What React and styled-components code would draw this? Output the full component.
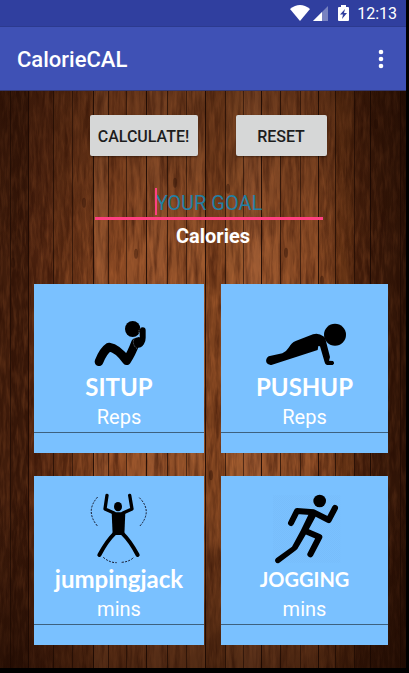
import React from "react";
import styled, { createGlobalStyle } from "styled-components";

/* Wooden wall: planks with individual tones, grain noise and darkened edges. */
const seams = [0, 10, 28, 53, 72, 93, 108, 126, 146, 167, 186, 205, 225, 243, 261, 280, 300, 318, 335, 354, 370, 400, 406];
const tones = ["#5a2a12", "#48200d", "#642f15", "#6c3517", "#733a1a", "#91522c", "#874722", "#904f28", "#95542d", "#8f4f28", "#96552c", "#7d421e", "#95552b", "#9c5a32", "#94532b", "#864924", "#8b4c26", "#7e431f", "#723a17", "#582910", "#4e240e", "#3e1b0a"];
const planks = tones
  .map((tone, i) => `<rect x="${seams[i]}" width="${seams[i + 1] - seams[i]}" height="578" fill="${tone}"/>`)
  .join("");
const seamLines = seams
  .slice(1, -1)
  .map((x, i) => `<path d="M${x + 0.5} 0V578" stroke="#1d0a03" stroke-opacity="${[0.6, 0.9, 0.7][i % 3]}"/>`)
  .join("");
const knots = [[13, 172], [286, 162], [175, 92], [136, 163], [376, 33], [228, 98], [211, 385], [84, 112], [322, 190]]
  .map(([x, y]) => `<ellipse cx="${x}" cy="${y}" rx="2" ry="5" fill="#2b1005" fill-opacity=".4"/>`)
  .join("");
const wood = `<svg xmlns="http://www.w3.org/2000/svg" viewBox="0 0 406 578" preserveAspectRatio="none">
<defs>
<filter id="d" x="0" y="0" width="100%" height="100%" color-interpolation-filters="sRGB"><feTurbulence type="fractalNoise" baseFrequency=".2 .02" numOctaves="4" seed="8"/><feColorMatrix values="0 0 0 0 .2 0 0 0 0 .06 0 0 0 0 .01 1.1 0 0 0 -.42"/></filter>
<filter id="l" x="0" y="0" width="100%" height="100%" color-interpolation-filters="sRGB"><feTurbulence type="fractalNoise" baseFrequency=".3 .05" numOctaves="3" seed="21"/><feColorMatrix values="0 0 0 0 .76 0 0 0 0 .43 0 0 0 0 .22 0 .8 0 0 -.33"/></filter>
<linearGradient id="h"><stop stop-color="#180700" stop-opacity=".4"/><stop offset=".24" stop-color="#180700" stop-opacity="0"/><stop offset=".78" stop-color="#180700" stop-opacity="0"/><stop offset="1" stop-color="#180700" stop-opacity=".6"/></linearGradient>
<linearGradient id="v" x2="0" y2="1"><stop stop-color="#180700" stop-opacity=".35"/><stop offset=".3" stop-color="#180700" stop-opacity="0"/><stop offset=".7" stop-color="#180700" stop-opacity="0"/><stop offset="1" stop-color="#180700" stop-opacity=".55"/></linearGradient>
</defs>
${planks}<rect width="406" height="578" filter="url(#d)"/><rect width="406" height="578" filter="url(#l)"/>${knots}${seamLines}<rect width="406" height="578" fill="url(#h)"/><rect width="406" height="578" fill="url(#v)"/></svg>`;

const GlobalStyle = createGlobalStyle`
  * { box-sizing: border-box; }
  body { margin: 0; background: #000; font-family: Roboto, "Noto Sans", sans-serif; }
`;

const Screen = styled.div`
  display: flex;
  flex-direction: column;
  min-height: 100vh;
  padding: 0 3px 5px 0;
  background: #000;
`;

const StatusBar = styled.div`
  display: flex;
  align-items: center;
  justify-content: flex-end;
  height: 27px;
  padding-right: 9px;
  background: #303f9f;
  border-bottom: 1px solid #2c3a8f;
  color: #fff;
`;

const StatusIcons = styled.svg`
  width: 60px;
  height: 18px;
  margin-right: 7px;
`;

const Clock = styled.time`
  padding-top: 2px;
  font-size: 16px;
  line-height: 20px;
  font-weight: 400;
`;

const AppBar = styled.header`
  display: flex;
  align-items: center;
  justify-content: space-between;
  height: 64px;
  padding: 0 13px 0 17px;
  background: #3f51b5;
  border-bottom: 1px solid #35396f;
  color: #fff;
`;

const AppTitle = styled.h1`
  margin: 0;
  padding-top: 2px;
  font-size: 22px;
  line-height: 28px;
  font-weight: 500;
`;

const MenuButton = styled.button`
  display: flex;
  justify-content: center;
  align-items: center;
  width: 24px;
  height: 40px;
  padding: 0;
  border: 0;
  background: none;
  color: inherit;
`;

const Content = styled.main`
  flex: 1;
  padding: 24px 18px 23px 34px;
  background: #5b3018 url("data:image/svg+xml,${encodeURIComponent(wood)}") 0 0 / 100% 100%;
`;

const GoalForm = styled.form`
  display: flex;
  flex-direction: column;
  align-items: center;
  padding-right: 4px;
`;

const Actions = styled.div`
  display: flex;
  gap: 38px;
  margin-bottom: 32px;
  padding-right: 2px;
`;

const ActionButton = styled.button`
  height: 41px;
  min-width: ${(p) => (p.$wide ? "108px" : "91px")};
  padding: 2px 0 0;
  border: 0;
  border-radius: 2px;
  background: #d6d7d7;
  box-shadow: 0 1px 2px rgba(0, 0, 0, 0.4);
  color: #1d1d1d;
  font: 500 16px/20px Roboto, sans-serif;
`;

const GoalField = styled.div`
  position: relative;
  width: 228px;
`;

const Caret = styled.span`
  position: absolute;
  top: 0;
  left: calc(50% - 54px);
  width: 2px;
  height: 27px;
  background: #ff4081;
`;

const GoalInput = styled.input`
  display: block;
  width: 100%;
  height: 32px;
  padding: 0;
  border: 0;
  border-bottom: 3px solid #ff4081;
  outline: 0;
  background: none;
  color: #2380a5;
  font: 400 20px/28px Roboto, sans-serif;
  text-align: center;
  &::placeholder { color: #2380a5; opacity: 1; }
`;

const GoalLabel = styled.label`
  margin: 4px 0 36px;
  padding-left: 8px;
  color: #fff;
  font-size: 20px;
  line-height: 24px;
  font-weight: 700;
`;

const Exercises = styled.section`
  display: grid;
  grid-template-columns: 170fr 167fr;
  gap: 23px 17px;
`;

const Card = styled.article`
  display: flex;
  flex-direction: column;
  align-items: center;
  padding-bottom: 20px;
  background: #7ac1ff;
`;

const Art = styled.svg`
  width: 100%;
  height: 88px;
`;

const CardTitle = styled.label`
  color: #fff;
  font-family: Lato, "Liberation Sans", sans-serif;
  font-size: ${(p) => p.$size};
  line-height: 30px;
  font-weight: 700;
`;

const AmountInput = styled.input`
  width: 100%;
  height: 31px;
  padding: 0 0 1px;
  border: 0;
  border-bottom: 1px solid #3d617f;
  border-radius: 0;
  outline: 0;
  background: none;
  color: #fff;
  font: 400 20px/28px Roboto, sans-serif;
  text-align: center;
  &::placeholder { color: #fff; opacity: 1; }
`;

const SitupArt = () => (
  <Art viewBox="12 12 510 264" aria-hidden="true">
    <ellipse cx="308" cy="147" rx="23" ry="24" />
    <path d="M207 245Q220 212 237 201Q263 205 290 242Q304 222 317 187" fill="none" stroke="#000" strokeWidth="26" strokeLinecap="round" strokeLinejoin="round" />
    <path d="M338 151V173Q338 190 325 191" fill="none" stroke="#000" strokeWidth="18" strokeLinecap="round" strokeLinejoin="round" />
    <circle cx="326" cy="187" r="16" />
    <path d="M330 170Q310 170 310 187Q312 201 322 206M331 145Q325 149 327 163" fill="none" stroke="#9ab" strokeWidth="2" strokeDasharray="3 3" />
  </Art>
);

const PushupArt = () => (
  <Art viewBox="18 12 501 264" aria-hidden="true">
    <circle cx="360" cy="164" r="33" />
    <path d="M161 229L202 220Q215 214 222 202Q229 188 242 183L294 163Q311 158 325 169Q331 173 332 180L345 231L342 242L354 243Q358 246 357 251L353 255H336Q330 254 329 247L315 199L310 198L308 210L169 255Q158 256 154 247Q151 236 161 229Z" />
  </Art>
);

const JackArt = () => (
  <Art viewBox="12 18 510 264" aria-hidden="true">
    <ellipse cx="264" cy="110" rx="12" ry="14" />
    <path d="M245 127H286L283 195H248Z" />
    <path d="M231 76L225 117L252 129M299 76L306 117L279 129" fill="none" stroke="#000" strokeWidth="10" strokeLinecap="round" strokeLinejoin="round" />
    <path d="M254 190Q230 213 208 255M277 190Q301 213 323 255" fill="none" stroke="#000" strokeWidth="12" strokeLinecap="round" />
    <path d="M203 81Q164 124 204 170M328 83Q370 125 327 171M220 262Q238 278 260 278M275 277Q300 275 312 261" fill="none" stroke="#112" strokeWidth="3" strokeDasharray="6 4" />
  </Art>
);

const JoggingArt = () => (
  <Art viewBox="18 18 501 264" aria-hidden="true">
    <defs>
      <pattern id="hatch" width="6" height="6" patternUnits="userSpaceOnUse">
        <path d="M0 6L6 0" stroke="#72b7f3" strokeWidth="1" />
      </pattern>
    </defs>
    <path d="M174 76H376V278H174Z" fill="url(#hatch)" />
    <circle cx="314" cy="93" r="19" />
    <path d="M228 159L246 123L296 127L341 150L360 114M271 183L313 201L286 253" fill="none" stroke="#000" strokeWidth="18" strokeLinecap="round" strokeLinejoin="round" />
    <path d="M286 122L305 134L279 182L247 237L241 242L192 279Q185 282 181 275Q178 270 183 265L231 230L257 182Z" />
  </Art>
);

const exercises = [
  { id: "situp", title: "SITUP", unit: "Reps", size: "24px", Picture: SitupArt },
  { id: "pushup", title: "PUSHUP", unit: "Reps", size: "24px", Picture: PushupArt },
  { id: "jumpingjack", title: "jumpingjack", unit: "mins", size: "24px", Picture: JackArt },
  { id: "jogging", title: "JOGGING", unit: "mins", size: "20px", Picture: JoggingArt },
];

export default function App() {
  return (
    <>
      <GlobalStyle />
      <Screen>
        <StatusBar>
          <StatusIcons viewBox="290 4 60 18" fill="#fff" aria-hidden="true">
            <path d="M290 9Q300 1 310 9L300 21Z" />
            <path d="M328 6V21H313Z" opacity=".35" />
            <path d="M322 12V21H313Z" />
            <path fillRule="evenodd" d="M341 5H346V7H348Q349 7 349 8V20Q349 21 348 21H339Q338 21 338 20V8Q338 7 339 7H341ZM345 9L340 14.5H343L342 19L347 13H344Z" />
          </StatusIcons>
          <Clock>12:13</Clock>
        </StatusBar>
        <AppBar>
          <AppTitle>CalorieCAL</AppTitle>
          <MenuButton type="button" aria-label="More options">
            <svg width="6" height="20" viewBox="0 0 6 20" fill="#fff" aria-hidden="true">
              <circle cx="3" cy="3" r="2.3" />
              <circle cx="3" cy="10" r="2.3" />
              <circle cx="3" cy="17" r="2.3" />
            </svg>
          </MenuButton>
        </AppBar>
        <Content>
          <GoalForm onSubmit={(e) => e.preventDefault()}>
            <Actions>
              <ActionButton type="submit" $wide>CALCULATE!</ActionButton>
              <ActionButton type="reset">RESET</ActionButton>
            </Actions>
            <GoalField>
              <GoalInput id="goal" inputMode="numeric" placeholder="YOUR GOAL" />
              <Caret />
            </GoalField>
            <GoalLabel htmlFor="goal">Calories</GoalLabel>
          </GoalForm>
          <Exercises>
            {exercises.map(({ id, title, unit, size, Picture }) => (
              <Card key={id}>
                <Picture />
                <CardTitle htmlFor={id} $size={size}>{title}</CardTitle>
                <AmountInput id={id} inputMode="numeric" placeholder={unit} />
              </Card>
            ))}
          </Exercises>
        </Content>
      </Screen>
    </>
  );
}
